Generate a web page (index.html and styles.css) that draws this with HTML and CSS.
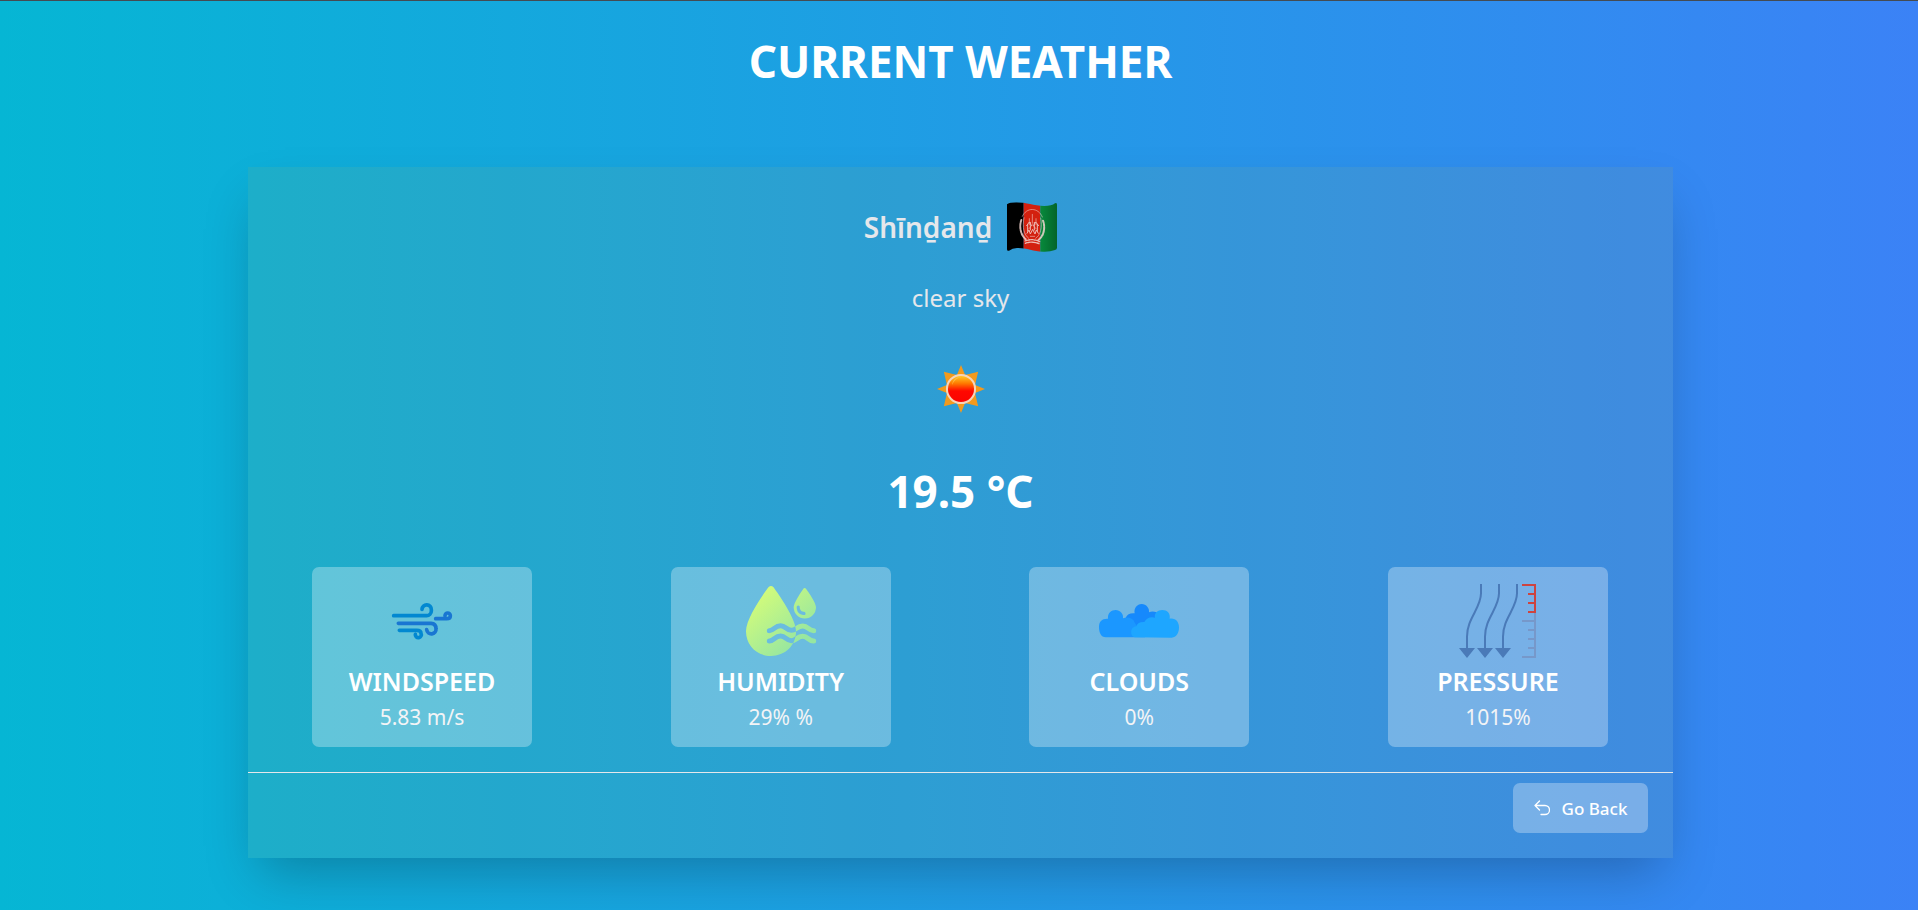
FILE: index.html
```html
<!DOCTYPE html>
<html lang="en">
<head>
<meta charset="utf-8">
<meta name="viewport" content="width=device-width, initial-scale=1">
<title>Current Weather</title>
<link rel="stylesheet" href="styles.css">
</head>
<body>
<main class="page">
  <h1 class="page-title">CURRENT WEATHER</h1>
  <section class="panel">
    <div class="summary">
      <h2 class="city"><span>Shīnḏanḏ</span>
        <svg class="flag" viewBox="0 0 150 150" role="img" aria-label="Flag of Afghanistan">
          <defs>
            <clipPath id="flagShape"><path d="M0 7Q6 1 28 1C60 1 78 12 112 12Q134 12 144 4Q150 1 150 8V137Q150 142 144 144Q128 150 108 149C78 148 58 137 30 138Q16 139 6 146Q0 148 0 142Z"/></clipPath>
            <linearGradient id="flagGreen"><stop offset="0" stop-color="#078a3c"/><stop offset="1" stop-color="#04642a"/></linearGradient>
          </defs>
          <g clip-path="url(#flagShape)">
            <path d="M0 0H50V150H0Z"/>
            <path fill="#d3200f" d="M50 0H100V150H50Z"/>
            <path fill="url(#flagGreen)" d="M100 0H150V150H100Z"/>
            <g fill="none" stroke="#f1d5d0" stroke-linecap="round" opacity=".85">
              <path stroke-width="6" stroke-dasharray="7 3" d="M43 54C37 72 39 96 56 112M108 56C115 74 112 100 95 113"/>
              <path stroke-width="2" d="M46 43C58 15 94 15 106 45M51 47C45 75 51 99 65 109M101 48C107 76 100 101 86 109"/>
              <path stroke-width="3" d="M60 94L66 84L70 96L77 82L84 96L88 84L94 94M62 88V67M70 84V61M82 84V61M91 88V67M59 71L67 60L73 70M80 70L86 60L95 71"/>
              <path stroke-width="2" d="M76 37V64M67 50V68M87 50V68M65 81L76 68L88 81M70 103H83"/>
              <path stroke-width="4" stroke-dasharray="6 3" d="M54 117Q76 108 98 119M55 124Q76 116 98 126"/>
            </g>
          </g>
        </svg>
      </h2>
      <p class="sky">clear sky</p>
      <svg class="sun" viewBox="0 0 140 140" role="img" aria-label="Sunny">
        <defs>
          <linearGradient id="sunCore" x1="0" y1="0" x2="0" y2="1"><stop offset="0" stop-color="#ffd52e"/><stop offset=".3" stop-color="#ff7a00"/><stop offset=".57" stop-color="#ff0800"/><stop offset="1" stop-color="#f90400"/></linearGradient>
        </defs>
        <path fill="#f39a1d" d="M70 0L82 29L120 20L111 58L140 70L111 82L120 120L82 111L70 140L58 111L20 120L29 82L0 70L29 58L20 20L58 29Z"/>
        <circle cx="70" cy="70" r="41" fill="url(#sunCore)" stroke="#f6d5ba" stroke-width="6"/>
        <path d="M44 58C45 42 59 33 71 35C58 38 49 46 44 58" fill="#ffc04a" opacity=".8"/>
      </svg>
      <p class="temp">19.5 °C</p>
    </div>
    <div class="cards">
      <article class="card">
        <svg class="icon" viewBox="246 78 240 240" aria-hidden="true">
          <g fill="none" stroke-width="11" stroke-linecap="round">
            <g stroke="#0288d1"><path d="M281 182H380A14 14 0 0 0 394 168V164A14 14 0 0 0 366 163"/><path d="M298 226H350Q363 226 363 235A9 9 0 1 1 346 238"/></g>
            <g stroke="#1976d2"><path d="M295 205H393Q408 206 408 221A14 14 0 0 1 380 224"/><path d="M407 191H440Q451 191 451 182A8 8 0 1 0 435 182"/></g>
          </g>
        </svg>
        <h3 class="card-title">WINDSPEED</h3>
        <p class="card-value">5.83 m/s</p>
      </article>
      <article class="card">
        <svg class="icon" viewBox="243 78 240 240" aria-hidden="true">
          <defs>
            <linearGradient id="drop" gradientUnits="userSpaceOnUse" x1="285" y1="120" x2="420" y2="265"><stop offset="0" stop-color="#d4fc79"/><stop offset="1" stop-color="#96e6a1"/></linearGradient>
            <mask id="dropCut" maskUnits="userSpaceOnUse" x="243" y="78" width="240" height="240"><path fill="#fff" d="M243 78H483V318H243Z"/><g fill="none" stroke="#000" stroke-width="15" stroke-linecap="round"><path d="M328 227C342 227 344 212 362 212C377 212 379 226 394 226C409 226 411 213 428 213C445 213 445 227 461 227"/><path d="M328 258C342 258 344 243 362 243C377 243 379 257 394 257C409 257 411 244 428 244C445 244 445 258 461 258"/></g></mask>
            <mask id="outsideDrop" maskUnits="userSpaceOnUse" x="243" y="78" width="240" height="240"><path fill="#fff" d="M243 78H483V318H243Z"/><path d="M326 96Q333 90 340 96C355 117 408 190 408 229C408 272 375 303 333 303S258 272 258 229C258 190 307 121 326 96Z"/></mask>
          </defs>
          <path mask="url(#dropCut)" fill="url(#drop)" d="M326 96Q333 90 340 96C355 117 408 190 408 229C408 272 375 303 333 303S258 272 258 229C258 190 307 121 326 96Z"/>
          <path fill="url(#drop)" fill-rule="evenodd" d="M430 101Q434 97 438 101C446 112 468 143 468 157A33 33 0 0 1 401 157C401 143 423 112 430 101ZM410 155C410 172 419 180 435 180Q439 177 435 171C424 171 419 166 419 154Q414 149 410 155Z"/>
          <g mask="url(#outsideDrop)" fill="none" stroke="url(#drop)" stroke-width="15" stroke-linecap="round"><path d="M394 226C409 226 411 213 428 213C445 213 445 227 461 227"/><path d="M394 257C409 257 411 244 428 244C445 244 445 258 461 258"/></g>
        </svg>
        <h3 class="card-title">HUMIDITY</h3>
        <p class="card-value">29% %</p>
      </article>
      <article class="card">
        <svg class="icon" viewBox="237 78 240 240" aria-hidden="true">
          <path fill="#1689fc" d="M317 188Q324 173 344 175C341 160 351 147 365 147S389 160 387 172Q397 167 410 172L405 215H325Z"/>
          <path fill="#1b97ff" d="M264 191C262 175 274 165 287 165S311 176 309 190Q323 184 335 191Q343 195 344 203L375 247H258C242 247 237 231 237 216C237 199 246 190 264 191Z"/>
          <path fill="#1ea6ff" d="M344 247C329 244 329 216 349 214Q353 200 373 201Q383 183 405 188C402 174 413 165 427 165S452 175 449 191C467 188 477 201 477 217C477 235 469 247 455 248Z"/>
        </svg>
        <h3 class="card-title">CLOUDS</h3>
        <p class="card-value">0%</p>
      </article>
      <article class="card">
        <svg class="icon" viewBox="234 78 240 240" aria-hidden="true">
          <path fill="none" stroke="#4a7ab8" stroke-width="6" d="M303 87V115C303 160 261 190 261 245V282M357 87V115C357 160 315 190 315 245V282M411 87V115C411 160 369 190 369 245V282"/>
          <path fill="#4a7ab8" d="M237 279H285L261 309ZM291 279H339L315 309ZM345 279H393L369 309Z"/>
          <path fill="none" stroke="#7698ca" stroke-width="6" d="M465 174V306H426M426 198H465M444 225H465M444 252H465M444 279H465"/>
          <path fill="none" stroke="#cd4440" stroke-width="6" d="M426 90H465V171H444M444 117H465M444 144H465"/>
        </svg>
        <h3 class="card-title">PRESSURE</h3>
        <p class="card-value">1015%</p>
      </article>
    </div>
    <footer class="panel-footer">
      <button class="back" type="button">
        <svg class="back-icon" viewBox="0 0 16 16" aria-hidden="true"><path fill="none" stroke="currentColor" stroke-width="1.300" stroke-linecap="round" stroke-linejoin="round" d="M5.500 1L1 5.500L5.500 10M1 5.500H11A4.500 4.500 0 0 1 11 14.500H7"/></svg>
        <span>Go Back</span>
      </button>
    </footer>
  </section>
</main>
</body>
</html>
```
FILE: styles.css
```css
* { box-sizing: border-box; }

body {
  margin: 0;
  min-height: 100vh;
  border-top: 1px solid #444b52;
  background: linear-gradient(to right, #06b6d4, #3b82f6);
  color: #fff;
  font-family: "Segoe UI", "Noto Sans", "Open Sans", sans-serif;
}

h1, h2, h3, p { margin: 0; }

.page {
  display: flex;
  flex-direction: column;
  align-items: center;
  padding: 30px 0 52px 3px;
}

.page-title {
  margin-bottom: 76px;
  font-size: 44px;
  font-weight: 700;
  line-height: 60px;
}

.panel {
  width: calc(100% - 490px);
  min-width: 1040px;
  background: rgba(173, 165, 70, 0.1);
  box-shadow: 0 25px 50px -12px rgba(0, 0, 0, 0.25);
}

.summary {
  display: flex;
  flex-direction: column;
  align-items: center;
  padding-top: 34px;
}

.city {
  display: flex;
  align-items: center;
  gap: 15px;
  color: #e5e7eb;
  font-size: 28px;
  font-weight: 600;
  line-height: 52px;
}

.flag { width: 50px; height: 50px; }

.sky {
  margin-top: 25px;
  color: #e5e7eb;
  font-size: 24px;
  line-height: 40px;
}

.sun {
  width: 48px;
  height: 48px;
  margin-top: 47px;
}

.temp {
  margin-top: 48px;
  font-size: 44px;
  font-weight: 700;
  line-height: 60px;
}

.cards {
  display: flex;
  justify-content: space-between;
  padding: 46px 65px 25px 64px;
}

.card {
  display: flex;
  flex-direction: column;
  align-items: center;
  width: 220px;
  height: 180px;
  padding-top: 14px;
  border-radius: 7px;
  background: rgba(255, 255, 255, 0.3);
}

.icon { width: 80px; height: 80px; }

.card-title {
  margin-top: 2px;
  font-size: 25px;
  font-weight: 600;
  line-height: 36px;
}

.card-value {
  color: #f3f4f6;
  font-size: 21px;
  line-height: 36px;
}

.panel-footer {
  display: flex;
  justify-content: flex-end;
  padding: 10px 25px 25px;
  border-top: 1px solid #e5e7eb;
}

.back {
  display: flex;
  align-items: center;
  justify-content: center;
  gap: 12px;
  width: 135px;
  height: 50px;
  padding: 0;
  border: 0;
  border-radius: 7px;
  background: rgba(255, 255, 255, 0.3);
  color: #fff;
  font-family: inherit;
  font-size: 17px;
  font-weight: 500;
}

.back-icon { width: 16px; height: 16px; }
```
